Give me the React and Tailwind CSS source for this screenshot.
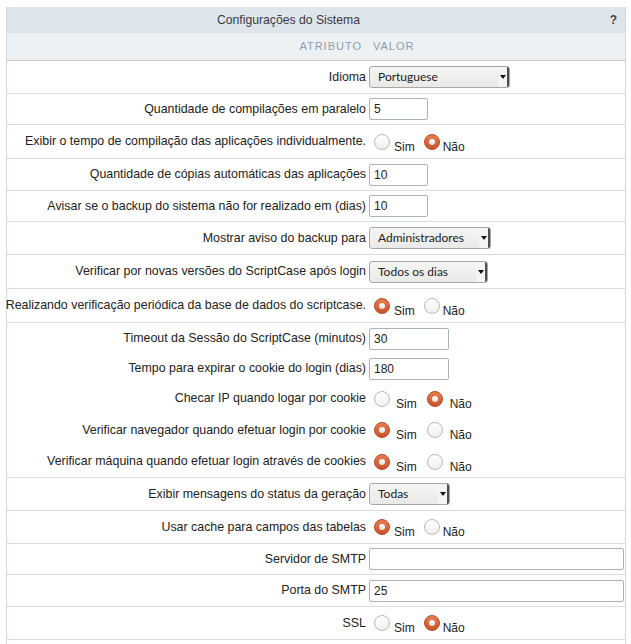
import React from "react";

const F = { fontFamily: '"Liberation Sans", Arial, sans-serif' };
const SF = { fontFamily: 'Lato, "Open Sans", sans-serif' };

function Row({ h, label, children, border = true }) {
  return (
    <div
      className={`flex ${h} ${border ? "border-b border-[#d5dce3]" : ""}`}
    >
      <div className="w-[361px] shrink-0 flex items-center justify-end pr-[2px] whitespace-nowrap text-[12.4px] text-[#222]">
        {label}
      </div>
      <div className="flex-1 flex items-center pl-[1px] pr-[2px]">{children}</div>
    </div>
  );
}

function Input({ w, value }) {
  return (
    <div
      className={`${w} h-[22px] border border-[#a9b3bd] rounded-[2px] bg-white flex items-center pl-[4px] text-[12px] text-[#222]`}
    >
      {value}
    </div>
  );
}

function Select({ w, value }) {
  return (
    <div
      className={`${w} h-[22px] border border-[#a6a6a6] rounded-[3px] bg-gradient-to-b from-[#f5f5f4] to-[#e9e9e8] flex items-center justify-between`}
    >
      <span className="pl-[8px] text-[12px] text-[#222]" style={SF}>
        {value}
      </span>
      <span className="h-full w-[11px] flex items-center justify-center border-r-2 border-[#4d4d4d] rounded-r-[2px] bg-[#f4f4f4]">
        <svg width="6" height="4" viewBox="0 0 6 4">
          <path d="M0 0 L6 0 L3 4 Z" fill="#111" />
        </svg>
      </span>
    </div>
  );
}

function Radio({ checked }) {
  if (checked) {
    return (
      <span className="w-[16px] h-[16px] rounded-full border border-[#b04a22] bg-gradient-to-b from-[#ea7d50] to-[#c9522a] flex items-center justify-center shrink-0">
        <span className="w-[6px] h-[6px] rounded-full bg-gradient-to-b from-[#ffffff] to-[#e8e0dc]" />
      </span>
    );
  }
  return (
    <span className="w-[16px] h-[16px] rounded-full border border-[#b7b7b7] bg-gradient-to-b from-[#ffffff] to-[#f0f0f0] shrink-0" />
  );
}

function Radios({ sim, wide = false }) {
  return (
    <div className="flex items-center pl-[5px] text-[12px] text-[#222]">
      <span className="flex items-center">
        <Radio checked={sim} />
        <span className={`translate-y-[5px] ${wide ? "ml-[6px]" : "ml-[4px]"}`}>Sim</span>
      </span>
      <span className={`flex items-center ${wide ? "ml-[10px]" : "ml-[9px]"}`}>
        <Radio checked={!sim} />
        <span className={`translate-y-[5px] ${wide ? "ml-[7px]" : "ml-[3px]"}`}>Não</span>
      </span>
    </div>
  );
}

export default function App() {
  return (
    <div className="bg-white w-[631px] h-[644px] overflow-hidden pt-[7px] pl-[6px]" style={F}>
      <div className="w-[620px] border-l border-r border-[#d0d7de]">
        <div className="flex h-[26px] bg-[#dfe5ec] items-center">
          <div className="flex-1 text-center text-[12.2px] text-[#3a3a3a] pl-[3px]">
            Configurações do Sistema
          </div>
          <div className="w-[58px] text-right pr-[8px] text-[12px] font-bold text-[#444]">?</div>
        </div>
        <div className="flex h-[28px] bg-[#eef1f4] items-center border-b border-[#c9ced3] text-[11px] tracking-[1px] text-[#8a9fb0]">
          <div className="w-[361px] text-right pr-[6px]">ATRIBUTO</div>
          <div className="pl-[5px]">VALOR</div>
        </div>

        <Row h="h-[33px]" label="Idioma">
          <Select w="w-[141px]" value="Portuguese" />
        </Row>
        <Row h="h-[31px]" label="Quantidade de compilações em paralelo">
          <Input w="w-[59px]" value="5" />
        </Row>
        <Row h="h-[34px]" label="Exibir o tempo de compilação das aplicações individualmente.">
          <Radios sim={false} />
        </Row>
        <Row h="h-[32px]" label="Quantidade de cópias automáticas das aplicações">
          <Input w="w-[59px]" value="10" />
        </Row>
        <Row h="h-[31px]" label="Avisar se o backup do sistema não for realizado em (dias)">
          <Input w="w-[59px]" value="10" />
        </Row>
        <Row h="h-[33px]" label="Mostrar aviso do backup para">
          <Select w="w-[122px]" value="Administradores" />
        </Row>
        <Row h="h-[34px]" label="Verificar por novas versões do ScriptCase após login">
          <Select w="w-[119px]" value="Todos os dias" />
        </Row>
        <Row h="h-[34px]" label="Realizando verificação periódica da base de dados do scriptcase.">
          <Radios sim={true} />
        </Row>

        <div className="border-b border-[#d5dce3]">
          <Row h="h-[31px]" border={false} label="Timeout da Sessão do ScriptCase (minutos)">
            <Input w="w-[80px]" value="30" />
          </Row>
          <Row h="h-[29px]" border={false} label="Tempo para expirar o cookie do login (dias)">
            <Input w="w-[80px]" value="180" />
          </Row>
          <Row h="h-[31px]" border={false} label="Checar IP quando logar por cookie">
            <Radios sim={false} wide />
          </Row>
          <Row h="h-[32px]" border={false} label="Verificar navegador quando efetuar login por cookie">
            <Radios sim={true} wide />
          </Row>
          <Row h="h-[31px]" border={false} label="Verificar máquina quando efetuar login através de cookies">
            <Radios sim={true} wide />
          </Row>
        </div>

        <Row h="h-[33px]" label="Exibir mensagens do status da geração">
          <Select w="w-[81px]" value="Todas" />
        </Row>
        <Row h="h-[33px]" label="Usar cache para campos das tabelas">
          <Radios sim={true} />
        </Row>
        <Row h="h-[31px]" label="Servidor de SMTP">
          <Input w="w-[255px]" value="" />
        </Row>
        <Row h="h-[32px]" label="Porta do SMTP">
          <Input w="w-[255px]" value="25" />
        </Row>
        <Row h="h-[33px]" label="SSL">
          <Radios sim={false} />
        </Row>
        <div className="h-[20px]" />
      </div>
    </div>
  );
}
